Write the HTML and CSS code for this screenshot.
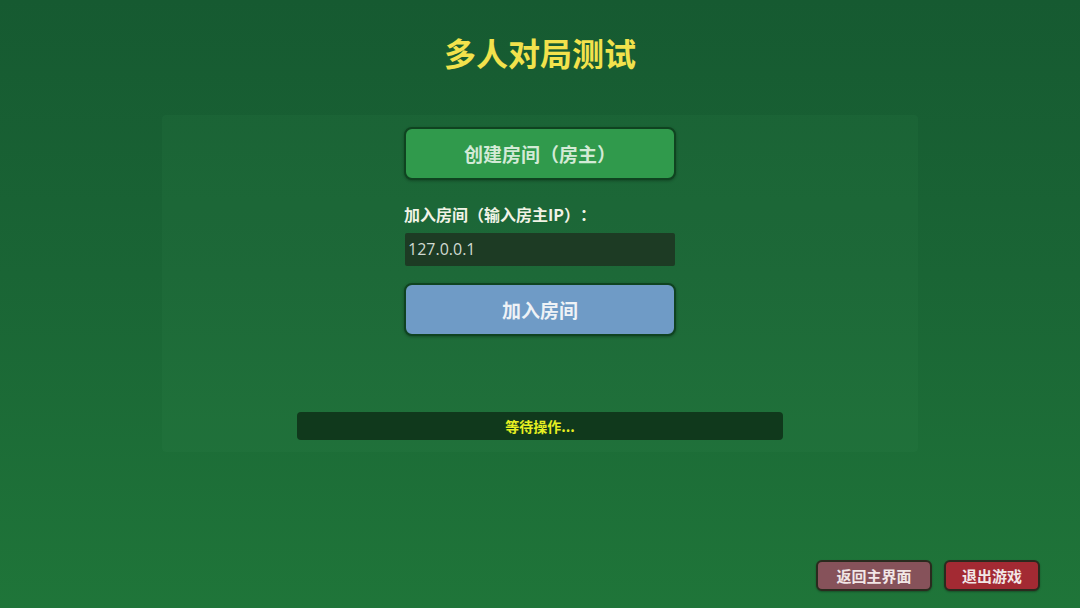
FILE: index.html
```html
<!DOCTYPE html>
<html lang="zh">
<head>
<meta charset="utf-8">
<title>多人对局测试</title>
<link rel="stylesheet" href="styles.css">
</head>
<body>
<div class="screen">
  <h1 class="title">多人对局测试</h1>
  <div class="panel">
    <button class="btn btn-create">创建房间（房主）</button>
    <label class="field-label">加入房间（输入房主IP）：</label>
    <div class="ip-input">127.0.0.1</div>
    <button class="btn btn-join">加入房间</button>
    <div class="status">等待操作...</div>
  </div>
  <div class="footer">
    <button class="small-btn btn-back">返回主界面</button>
    <button class="small-btn btn-quit">退出游戏</button>
  </div>
</div>
</body>
</html>
```
FILE: styles.css
```css
html, body {
  margin: 0;
  padding: 0;
}
body {
  width: 1080px;
  height: 608px;
  overflow: hidden;
  font-family: "Noto Sans CJK SC", "Noto Sans", sans-serif;
  text-spacing-trim: space-all;
}
.screen {
  width: 1080px;
  height: 608px;
  display: flex;
  flex-direction: column;
  align-items: center;
  background: linear-gradient(to bottom, #165a31 0%, #1a6535 45%, #1f7539 100%);
}
.title {
  margin: 32px 0 0;
  height: 40px;
  line-height: 40px;
  font-size: 32px;
  font-weight: 700;
  color: #f2e24c;
}
.panel {
  margin-top: 43px;
  width: 756px;
  height: 337px;
  box-sizing: border-box;
  padding-top: 12px;
  display: flex;
  flex-direction: column;
  align-items: center;
  background: rgba(60, 150, 90, 0.1);
  border-radius: 4px;
}
.btn {
  width: 272px;
  height: 53px;
  box-sizing: border-box;
  border: 2px solid #0f4320;
  border-radius: 8px;
  font-family: inherit;
  font-size: 19px;
  font-weight: 700;
  padding: 0;
  box-shadow: 0 1px 3px rgba(0,0,0,0.3);
  text-spacing-trim: space-all;
}
.btn-create {
  background: #309a4c;
  color: #d3ead6;
}
.field-label {
  width: 272px;
  margin-top: 22px;
  height: 24px;
  line-height: 24px;
  font-size: 16px;
  font-weight: 700;
  color: #f1f3e6;
}
.ip-input {
  width: 270px;
  height: 33px;
  margin-top: 7px;
  box-sizing: border-box;
  padding-left: 3px;
  line-height: 33px;
  background: #1d3b24;
  color: #d0d9d0;
  font-family: "Open Sans", "Noto Sans", sans-serif;
  font-size: 16px;
  border-radius: 2px;
}
.btn-join {
  margin-top: 17px;
  height: 53px;
  background: #6f9bc6;
  color: #eef2f6;
}
.status {
  margin-top: 76px;
  width: 486px;
  height: 28px;
  line-height: 28px;
  text-align: center;
  background: #10391c;
  border-radius: 4px;
  color: #e6ef22;
  font-size: 14px;
  font-weight: 700;
}
.footer {
  margin-top: auto;
  margin-bottom: 17px;
  align-self: stretch;
  display: flex;
  justify-content: flex-end;
  gap: 12px;
  padding-right: 40px;
}
.small-btn {
  height: 31px;
  box-sizing: border-box;
  border: 2px solid #2a2a1e;
  border-radius: 6px;
  font-family: inherit;
  font-size: 15px;
  font-weight: 700;
  color: #f1e6e6;
  padding: 0;
  box-shadow: 0 1px 2px rgba(0,0,0,0.3);
}
.btn-back {
  width: 116px;
  background: #86525a;
}
.btn-quit {
  width: 96px;
  background: #a32a33;
}
```
